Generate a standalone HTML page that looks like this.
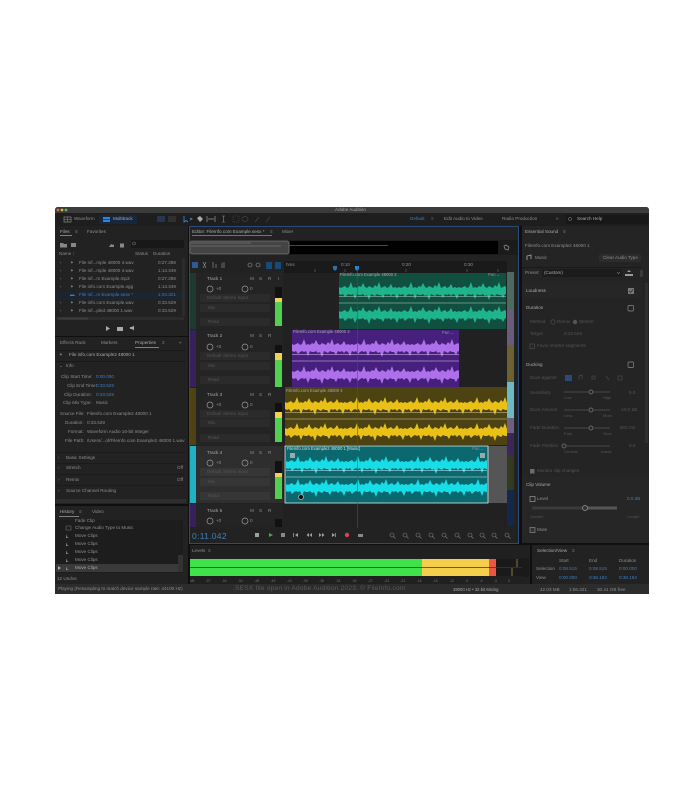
<!DOCTYPE html>
<html><head><meta charset="utf-8"><style>
html,body{margin:0;padding:0;background:#fff;width:700px;height:800px;overflow:hidden}
#r{position:absolute;left:0;top:0;width:700px;height:800px;font:4.6px/6px "Liberation Sans",sans-serif;color:#8e8e8e;filter:blur(.35px)}
#r i,#r b{position:absolute;font-style:normal;font-weight:normal;white-space:nowrap}
#r u{position:absolute;text-decoration:none;display:block}
.bl{color:#3a7fc0}.dim{color:#555}.mid{color:#707070}.br{color:#aaa}
svg{position:absolute;left:0;top:0}
</style></head><body>
<div id="r">
<!-- chrome -->
<u style="left:55px;top:207px;width:594px;height:387px;background:#0f0f0f;border-radius:3px 3px 0 0"></u>
<u style="left:55px;top:207px;width:594px;height:6px;background:#3b3b3b;border-radius:3px 3px 0 0"></u>
<u style="left:55px;top:213px;width:594px;height:13px;background:#1e1e1e"></u>
<!-- panels -->
<u style="left:55px;top:226px;width:133px;height:110px;background:#222"></u>
<u style="left:55px;top:337px;width:133px;height:167px;background:#222"></u>
<u style="left:55px;top:506px;width:133px;height:78px;background:#222"></u>
<u style="left:190px;top:227px;width:328px;height:316px;background:#222;outline:1px solid #2b4a78"></u>
<u style="left:522px;top:226px;width:127px;height:317px;background:#242424"></u>
<u style="left:522px;top:477px;width:127px;height:66px;background:#262626"></u>
<u style="left:190px;top:545px;width:340px;height:39px;background:#202020"></u>
<u style="left:532px;top:545px;width:117px;height:39px;background:#222"></u>
<u style="left:55px;top:584px;width:594px;height:10px;background:#2c2c2c"></u>

<svg width="700" height="800" viewBox="0 0 700 800">
<defs>
<path id="wv" d="M0 6L2 7L4 6L6 5L8 7L10 6L12 1L14 7L16 6L18 7L20 5L22 6L24 2L26 6L28 7L30 5L32 6L34 7L36 4L38 6L40 1L42 7L44 6L46 5L48 7L50 6L52 3L54 7L56 6L58 7L60 6L60 13L58 18L56 14L54 13L52 15L50 13L48 14L46 13L44 17L42 14L40 14L38 13L36 15L34 14L32 13L30 19L28 14L26 15L24 13L22 14L20 14L18 13L16 18L14 13L12 14L10 13L8 14L6 16L4 13L2 14L0 13Z"/>
<pattern id="pg" width="60" height="20" patternUnits="userSpaceOnUse"><use href="#wv" fill="#1eb58d"/></pattern>
<pattern id="pp" width="60" height="20" patternUnits="userSpaceOnUse"><use href="#wv" fill="#ae70ea"/></pattern>
<pattern id="py" width="60" height="20" patternUnits="userSpaceOnUse"><use href="#wv" fill="#e9c116"/></pattern>
<pattern id="pc" width="60" height="20" patternUnits="userSpaceOnUse"><use href="#wv" fill="#16dde6"/></pattern>
</defs>
<!-- window buttons -->
<circle cx="58" cy="210" r="1.400" fill="#e8604f"/><circle cx="62" cy="210" r="1.400" fill="#e3b23b"/><circle cx="66" cy="210" r="1.400" fill="#4fc04b"/>
<!-- toolbar tabs -->
<rect x="99" y="215" width="38" height="9" fill="#16263d"/>
<rect x="64" y="217" width="7" height="5" fill="none" stroke="#888" stroke-width=".7"/><path d="M64 219.500h7M67.500 217v5" stroke="#888" stroke-width=".5"/>
<rect x="103" y="217" width="7" height="5" fill="#2f86d6"/><path d="M103 219.500h7" stroke="#16263d" stroke-width=".6"/>
<rect x="157" y="216" width="8" height="6" fill="#26364e"/><rect x="168" y="216" width="8" height="6" fill="#303030"/>
<path d="M184 216v6l2-1.500 2 1.500M190 218l2 1-2 1" stroke="#3f93d8" stroke-width=".8" fill="none"/>
<path d="M197 218l3-2 3 3-3 3z" fill="#aaa"/>
<path d="M207 216v6M215 216v6M208 219h6" stroke="#999" stroke-width=".7"/>
<path d="M222 216h3M222 222h3M223.500 216v6" stroke="#888" stroke-width=".6"/>
<g stroke="#444" stroke-width=".7" fill="none"><rect x="233" y="216" width="6" height="6" stroke-dasharray="1 1"/><ellipse cx="245" cy="219" rx="3" ry="2.500"/><path d="M255 222l4-5M266 222l4-5"/></g>
<rect x="566" y="215" width="82" height="9" fill="#181818"/>
<circle cx="570" cy="219" r="1.500" fill="none" stroke="#999" stroke-width=".5"/>
<!-- left panel tabs -->
<rect x="60" y="235" width="12" height=".8" fill="#999"/>
<g fill="#888"><path d="M60 243h3l1 1h3v3.500h-7z"/><path d="M71 243h5v4h-5z"/><path d="M109 247l2-3 2 1 1-1v3z"/><rect x="120" y="243.500" width="4" height="4"/></g>
<rect x="131" y="240" width="53" height="8" fill="#181818"/>
<circle cx="134" cy="243.500" r="1.500" fill="none" stroke="#888" stroke-width=".5"/>
<!-- selected row -->
<rect x="56" y="292" width="128" height="8" fill="#1c2430"/>
<rect x="56" y="317" width="128" height="3" fill="#2c2c2c"/><rect x="58" y="317.500" width="30" height="2" fill="#3d3d3d"/>
<rect x="182" y="258" width="3" height="58" fill="#2c2c2c"/>
<g fill="#aaa"><path d="M106 326l4 2.500-4 2.500z"/><path d="M117 327h6v4h-6z"/><path d="M130 327h2l2-1.500v5l-2-1.500h-2z"/></g>
<rect x="135" y="347" width="24" height=".8" fill="#999"/>
<rect x="56" y="350" width="130" height=".6" fill="#151515"/><rect x="56" y="361" width="130" height=".6" fill="#151515"/>
<rect x="56" y="452" width="130" height=".6" fill="#171717"/><rect x="56" y="463" width="130" height=".6" fill="#171717"/><rect x="56" y="474" width="130" height=".6" fill="#171717"/><rect x="56" y="485" width="130" height=".6" fill="#171717"/>
<rect x="56" y="499" width="130" height="4" fill="#2e2e2e"/>
<rect x="59" y="516" width="20" height=".8" fill="#999"/>
<rect x="56" y="520" width="127" height="53" fill="#1d1d1d"/>
<rect x="56" y="564" width="122" height="8" fill="#3a3a3a"/><rect x="178" y="555" width="5" height="17" fill="#333"/>
<path d="M58 566l3 2-3 2z" fill="#aaa"/>
<g fill="#888"><path d="M66 534l1 3 2 1-3 0zM66 542l1 3 2 1-3 0zM66 550l1 3 2 1-3 0zM66 558l1 3 2 1-3 0zM66 566l1 3 2 1-3 0z"/><rect x="66" y="526" width="5" height="4" fill="none" stroke="#777" stroke-width=".5"/></g>

<!-- editor tabs / overview -->
<rect x="192" y="235" width="80" height=".8" fill="#888"/>
<rect x="190" y="240" width="328" height="15" fill="#1b1b1b"/>
<rect x="290" y="241" width="208" height="13" fill="#000"/>
<rect x="190" y="241" width="99" height="13" rx="2" fill="#444" stroke="#777" stroke-width=".7"/>
<path d="M191 243h60M191 246h90" stroke="#666" stroke-width="1"/>
<path d="M289 245.500h99" stroke="#6a6236" stroke-width=".7"/>
<path d="M506 245l3 2-1 3-3-1-1-3z" fill="none" stroke="#888" stroke-width=".8"/>
<!-- edit tools -->
<rect x="192" y="262" width="6" height="6" fill="#2b5a96"/>
<rect x="266" y="262" width="6" height="7" fill="#174a7c"/><rect x="275" y="262" width="6" height="7" fill="#174a7c"/>
<g fill="none" stroke="#999" stroke-width=".6"><path d="M203 262l3 6M206 262l-3 6M213 262v6M216 264v4M222 263v5M224 262v6"/><circle cx="250" cy="265" r="2"/><circle cx="258" cy="265" r="2"/></g>
<!-- ruler -->
<rect x="284" y="261" width="223" height="12" fill="#1a1a1a"/>
<g stroke="#777" stroke-width=".5"><path d="M315 269v3M345 269v3M406 269v3M467 269v3M498 269v3"/></g>
<path d="M333 266h4v3l-2 2-2-2z" fill="#2f6fb3"/><path d="M355 266h4v3l-2 2-2-2z" fill="#2f86d6"/>
<!-- timeline background -->
<rect x="284" y="273" width="223" height="254" fill="#212121"/>
<!-- Track headers -->
<rect x="190" y="273" width="93" height="56" fill="#242424"/>
<rect x="190" y="330" width="93" height="57" fill="#242424"/>
<rect x="190" y="388" width="93" height="57" fill="#242424"/>
<rect x="190" y="446" width="93" height="57" fill="#2e2e2e"/>
<rect x="190" y="504" width="93" height="23" fill="#242424"/>
<g fill="#2b2b2b"><rect x="200" y="294" width="70" height="8"/><rect x="200" y="304" width="70" height="8"/><rect x="200" y="318" width="70" height="8"/><rect x="200" y="352" width="70" height="8"/><rect x="200" y="362" width="70" height="8"/><rect x="200" y="376" width="70" height="8"/><rect x="200" y="410" width="70" height="8"/><rect x="200" y="419" width="70" height="8"/><rect x="200" y="434" width="70" height="8"/></g>
<g fill="#363636"><rect x="200" y="468" width="70" height="8"/><rect x="200" y="478" width="70" height="8"/><rect x="200" y="492" width="70" height="8"/></g>
<rect x="190" y="273" width="6" height="56" fill="#1e3a30"/>
<rect x="190" y="330" width="6" height="57" fill="#36215c"/>
<rect x="190" y="388" width="6" height="57" fill="#4e4413"/>
<rect x="190" y="446" width="6" height="57" fill="#21b1c2"/>
<rect x="190" y="504" width="6" height="23" fill="#36215c"/>
<!-- clips -->
<rect x="339" y="273" width="167" height="56" fill="#115040"/>
<g transform="translate(339 281)"><rect width="167" height="20" fill="url(#pg)"/></g>
<g transform="translate(339 305)"><rect width="167" height="20" fill="url(#pg)"/></g>
<path d="M339 296.500h167M339 303h167" stroke="#b4d4ca" stroke-width=".6"/>
<rect x="292" y="330" width="167" height="57" fill="#47207e"/>
<g transform="translate(292 338)"><rect width="167" height="20" fill="url(#pp)"/></g>
<g transform="translate(292 365)"><rect width="167" height="20" fill="url(#pp)"/></g>
<path d="M292 354.500h167M292 361h167" stroke="#dcc8f0" stroke-width=".6"/>
<rect x="285" y="387" width="222" height="58" fill="#4c4212"/>
<g transform="translate(285 396)"><rect width="222" height="20" fill="url(#py)"/></g>
<g transform="translate(285 422)"><rect width="222" height="20" fill="url(#py)"/></g>
<path d="M285 412.500h222M285 419h222" stroke="#d8d2a8" stroke-width=".6"/>
<rect x="488" y="446" width="19" height="57" fill="#555"/>
<rect x="285" y="446" width="203" height="57" fill="#0b686f" stroke="#dcecec" stroke-width=".8"/>
<g transform="translate(286 455)"><rect width="201" height="20" fill="url(#pc)"/></g>
<g transform="translate(286 478)"><rect width="201" height="20" fill="url(#pc)"/></g>
<path d="M286 470.500h201M286 477h201" stroke="#cfeff0" stroke-width=".6"/>
<rect x="290" y="453" width="5" height="5" fill="#9aa"/><rect x="480" y="453" width="5" height="5" fill="#9aa"/>
<circle cx="301" cy="497" r="2.500" fill="#111" stroke="#ccc" stroke-width=".6"/>
<!-- playhead -->
<rect x="357" y="266" width=".8" height="262" fill="#a82a3a" opacity=".7"/>
<!-- track scroll -->
<rect x="507" y="272" width="7" height="38" fill="#4c6a60"/><rect x="507" y="310" width="7" height="35" fill="#695c7b"/><rect x="507" y="345" width="7" height="37" fill="#6c6131"/><rect x="507" y="382" width="7" height="36" fill="#6cb8c5"/><rect x="507" y="418" width="7" height="15" fill="#6d6080"/><rect x="507" y="433" width="7" height="22" fill="#3a2658"/><rect x="507" y="455" width="7" height="35" fill="#343a20"/><rect x="507" y="490" width="7" height="36" fill="#14284e"/>
<!-- transport -->
<g fill="#a0a0a0"><rect x="255" y="533" width="4" height="4"/><path d="M269 533l4 2-4 2z" fill="#3fae4a"/><rect x="281" y="533" width="4" height="4" fill="#888"/><path d="M293 533v4h.8v-4zM298 533v4l-3-2zM312 533v4l-2.500-2zM309 533v4l-2.500-2zM319 533v4l2.500-2zM322 533v4l2.500-2zM336 533v4h-.8v-4zM332 533v4l3-2z"/><circle cx="347" cy="535" r="2.200" fill="#d8434c"/><path d="M358 534h5v3h-5z" fill="#888"/></g>
<g fill="none" stroke="#808080" stroke-width=".6"><circle cx="392" cy="535" r="2"/><circle cx="405" cy="535" r="2"/><circle cx="418" cy="535" r="2"/><circle cx="431" cy="535" r="2"/><circle cx="444" cy="535" r="2"/><circle cx="457" cy="535" r="2"/><circle cx="470" cy="535" r="2"/><circle cx="482" cy="535" r="2"/><circle cx="494" cy="535" r="2"/><circle cx="507" cy="535" r="2"/><path d="M393.500 536.500l2 2M406.500 536.500l2 2M419.500 536.500l2 2M432.500 536.500l2 2M445.500 536.500l2 2M458.500 536.500l2 2M471.500 536.500l2 2M483.500 536.500l2 2M495.500 536.500l2 2M508.500 536.500l2 2"/></g>
<!-- levels -->
<rect x="190" y="559" width="232" height="17" fill="#3fe24a"/>
<rect x="422" y="559" width="67" height="17" fill="#f5cf4c"/>
<rect x="489" y="559" width="7" height="17" fill="#ea5545"/>
<rect x="496" y="559" width="33" height="17" fill="#1a1a1a"/>
<path d="M190 567.500h339" stroke="#154a18" stroke-width=".8"/>
<path d="M517 559v8M512 568v8" stroke="#c9b74a" stroke-width=".6"/>
<path d="M496 567.500h33M523 559v17" stroke="#333" stroke-width=".5"/>
<!-- right panel -->
<rect x="522" y="267" width="120" height=".6" fill="#151515"/>
<rect x="522" y="283" width="120" height="15" fill="#262626"/>
<rect x="599" y="254" width="42" height="8" rx="1" fill="#2c2c2c"/>
<rect x="542" y="269" width="80" height="8" fill="#1c1c1c"/>
<path d="M617 272l1.500 2 1.500-2" stroke="#999" fill="none" stroke-width=".5"/>
<path d="M627 272l2-2 2 2zM625 274h8v2h-8z" fill="#999"/><rect x="640" y="270" width="3" height="7" fill="#3a3a3a"/>
<path d="M527 260v-4l4-1v4" fill="none" stroke="#aaa" stroke-width=".8"/>
<rect x="628" y="288" width="6" height="6" fill="#777"/><path d="M629 291l1.500 1.500 2.500-3" stroke="#222" fill="none" stroke-width=".7"/>
<rect x="628" y="305.500" width="5.500" height="5.500" rx="1" fill="none" stroke="#888" stroke-width=".7"/>
<rect x="628" y="362" width="5.500" height="5.500" rx="1" fill="none" stroke="#888" stroke-width=".7"/>
<circle cx="553" cy="322" r="2.200" fill="none" stroke="#555" stroke-width=".6"/><circle cx="575" cy="322" r="2.200" fill="#555"/>
<rect x="530" y="344" width="4.500" height="4.500" fill="none" stroke="#555" stroke-width=".6"/>
<rect x="565" y="375" width="7" height="6" fill="#2a4a78"/>
<g fill="none" stroke="#555" stroke-width=".6"><path d="M579 380v-4l3-1v4M592 376h3v3h-3zM606 376l3 4M618 376h4v4h-4z"/></g>
<g stroke="#555" stroke-width=".7"><path d="M564 392h46M564 410h46M564 428h46M564 446h46"/></g>
<g fill="#242424" stroke="#808080" stroke-width=".7"><circle cx="591" cy="392" r="2"/><circle cx="591" cy="410" r="2"/><circle cx="591" cy="428" r="2"/><circle cx="564" cy="446" r="2"/></g>
<rect x="530" y="469" width="4.500" height="4.500" fill="#6b6b6b"/>
<rect x="645" y="283" width="3" height="160" fill="#2f2f2f"/>
<rect x="530" y="496.500" width="5" height="5" fill="none" stroke="#999" stroke-width=".7"/>
<rect x="532" y="506.500" width="85" height="3" fill="#3b3b3b"/><rect x="585" y="506.500" width="32" height="3" fill="#555"/>
<circle cx="585" cy="508" r="2.500" fill="#333" stroke="#999" stroke-width=".7"/>
<rect x="530" y="527.500" width="5" height="5" fill="#333" stroke="#888" stroke-width=".7"/>
<rect x="522" y="558" width="7" height="19" fill="#1a1a1a"/>
<!-- knobs -->
<g fill="none" stroke="#9a9a9a" stroke-width=".7"><circle cx="210" cy="289" r="3"/><circle cx="245" cy="289" r="3"/><circle cx="210" cy="347" r="3"/><circle cx="245" cy="347" r="3"/><circle cx="210" cy="405" r="3"/><circle cx="245" cy="405" r="3"/><circle cx="210" cy="463" r="3"/><circle cx="245" cy="463" r="3"/><circle cx="210" cy="521" r="3"/><circle cx="245" cy="521" r="3"/></g>
</svg>

<!-- Text: top bar -->
<i style="left:335px;top:207px;color:#a4a4a4">Adobe Audition</i>
<i style="left:74px;top:216px">Waveform</i><i class="br" style="left:113px;top:216px">Multitrack</i>
<i class="bl" style="left:410px;top:216px">Default</i><i class="bl" style="left:431px;top:216px">≡</i>
<i style="left:444px;top:216px">Edit Audio to Video</i><i style="left:502px;top:216px">Radio Production</i>
<i style="left:556px;top:216px">»</i><i class="br" style="left:577px;top:216px">Search Help</i>
<!-- Files -->
<i class="br" style="left:60px;top:229px">Files</i><i style="left:75px;top:229px">≡</i><i style="left:87px;top:229px">Favorites</i>
<i style="left:59px;top:251px">Name ↑</i><i style="left:135px;top:251px">Status</i><i style="left:153px;top:251px">Duration</i>
<i style="left:70px;top:260px">✦</i><i style="left:79px;top:260px">File inf...mple 48000 4.wav</i><i style="left:158px;top:260px">0:27.288</i>
<i style="left:70px;top:268px">✦</i><i style="left:79px;top:268px">File inf...mple 48000 4.wav</i><i style="left:158px;top:268px">1:14.349</i>
<i style="left:70px;top:276px">✦</i><i style="left:79px;top:276px">File inf...m Example.mp3</i><i style="left:158px;top:276px">0:27.288</i>
<i style="left:70px;top:284px">✦</i><i style="left:79px;top:284px">File info.com Example.ogg</i><i style="left:158px;top:284px">1:14.349</i>
<i class="bl" style="left:70px;top:292px">▬</i><i class="bl" style="left:79px;top:292px">File inf...m Example.sesx *</i><i class="bl" style="left:158px;top:292px">1:04.321</i>
<i style="left:70px;top:300px">✦</i><i style="left:79px;top:300px">File info.com Example.wav</i><i style="left:158px;top:300px">0:33.529</i>
<i style="left:70px;top:308px">✦</i><i style="left:79px;top:308px">File inf...pled 48000 1.wav</i><i style="left:158px;top:308px">0:33.529</i>
<i style="left:60px;top:260px">›</i><i style="left:60px;top:268px">›</i><i style="left:60px;top:276px">›</i><i style="left:60px;top:284px">›</i><i style="left:60px;top:300px">›</i><i style="left:60px;top:308px">›</i>
<!-- Properties -->
<i style="left:60px;top:340px">Effects Rack</i><i style="left:101px;top:340px">Markers</i><i class="br" style="left:135px;top:340px">Properties</i><i style="left:162px;top:340px">≡</i><i style="left:179px;top:340px">»</i>
<i style="left:59px;top:352px">✦</i><i class="br" style="left:69px;top:352px">File info.com Example2 48000 1</i>
<i style="left:59px;top:363px">⌄</i><i style="left:66px;top:363px">Info</i>
<i style="left:61px;top:374px">Clip Start Time:</i><i class="bl" style="left:96px;top:374px">0:00.000</i>
<i style="left:67px;top:383px">Clip End Time:</i><i class="bl" style="left:96px;top:383px">0:33.529</i>
<i style="left:64px;top:392px">Clip Duration:</i><i class="bl" style="left:96px;top:392px">0:33.529</i>
<i style="left:63px;top:400px">Clip Mix Type:</i><i style="left:96px;top:400px">Music</i>
<i style="left:60px;top:411px">Source File:</i><i style="left:87px;top:411px">FileInfo.com Example2 48000 1</i>
<i style="left:65px;top:420px">Duration:</i><i style="left:87px;top:420px">0:33.529</i>
<i style="left:68px;top:429px">Format:</i><i style="left:87px;top:429px">Waveform Audio 16-bit Integer</i>
<i style="left:65px;top:438px">File Path:</i><i style="left:87px;top:438px">/Users/...of/FileInfo.com Example2 48000 1.wav</i>
<i style="left:58px;top:455px">›</i><i style="left:66px;top:455px">Basic Settings</i>
<i style="left:58px;top:465px">›</i><i style="left:66px;top:465px">Stretch</i><i style="left:177px;top:465px">Off</i>
<i style="left:58px;top:477px">›</i><i style="left:66px;top:477px">Remix</i><i style="left:177px;top:477px">Off</i>
<i style="left:58px;top:488px">›</i><i style="left:66px;top:488px">Source Channel Routing</i>
<!-- History -->
<i class="br" style="left:60px;top:509px">History</i><i style="left:79px;top:509px">≡</i><i style="left:92px;top:509px">Video</i>
<i style="left:75px;top:518px">Fade Clip</i><i style="left:75px;top:525px">Change Audio Type to Music</i>
<i style="left:75px;top:533px">Move Clips</i><i style="left:75px;top:541px">Move Clips</i><i style="left:75px;top:549px">Move Clips</i><i style="left:75px;top:557px">Move Clips</i><i class="br" style="left:75px;top:565px">Move Clips</i>
<i style="left:57px;top:576px">12 Undos</i>
<i style="left:58px;top:586px">Playing (Resampling to match device sample rate: 44100 Hz)</i>
<!-- Editor -->
<i class="br" style="left:192px;top:229px">Editor: FileInfo.com Example.sesx *</i><i style="left:270px;top:229px">≡</i><i style="left:282px;top:229px">Mixer</i>
<i style="left:286px;top:262px">hms</i><i style="left:341px;top:262px">0:10</i><i style="left:402px;top:262px">0:20</i><i style="left:464px;top:262px">0:30</i>
<!-- Track headers -->
<i class="br" style="left:207px;top:276px">Track 1</i><i style="left:250px;top:276px">M</i><i style="left:259px;top:276px">S</i><i style="left:268px;top:276px">R</i><i style="left:278px;top:276px">I</i>
<i class="dim" style="left:207px;top:295px">Default Stereo Input</i><i class="dim" style="left:208px;top:305px">Mix</i><i class="dim" style="left:208px;top:319px">Read</i>
<i class="br" style="left:207px;top:333px">Track 2</i><i style="left:250px;top:333px">M</i><i style="left:259px;top:333px">S</i><i style="left:268px;top:333px">R</i>
<i class="dim" style="left:207px;top:353px">Default Stereo Input</i><i class="dim" style="left:208px;top:363px">Mix</i><i class="dim" style="left:208px;top:377px">Read</i>
<i class="br" style="left:207px;top:392px">Track 3</i><i style="left:250px;top:392px">M</i><i style="left:259px;top:392px">S</i><i style="left:268px;top:392px">R</i>
<i class="dim" style="left:207px;top:411px">Default Stereo Input</i><i class="dim" style="left:208px;top:420px">Mix</i><i class="dim" style="left:208px;top:435px">Read</i>
<i class="br" style="left:207px;top:450px">Track 4</i><i style="left:250px;top:450px">M</i><i style="left:259px;top:450px">S</i><i style="left:268px;top:450px">R</i>
<i class="dim" style="left:207px;top:469px">Default Stereo Input</i><i class="dim" style="left:208px;top:479px">Mix</i><i class="dim" style="left:208px;top:493px">Read</i>
<i class="br" style="left:207px;top:508px">Track 5</i><i style="left:250px;top:508px">M</i><i style="left:259px;top:508px">S</i><i style="left:268px;top:508px">R</i>
<i style="left:216px;top:286px">+0</i><i style="left:250px;top:286px">0</i><i style="left:216px;top:344px">+0</i><i style="left:250px;top:344px">0</i><i style="left:216px;top:402px">+0</i><i style="left:250px;top:402px">0</i><i style="left:216px;top:460px">+0</i><i style="left:250px;top:460px">0</i><i style="left:216px;top:518px">+0</i><i style="left:250px;top:518px">0</i>
<!-- meters -->
<u style="left:275px;top:287px;width:7px;height:11px;background:#111"></u><u style="left:275px;top:298px;width:7px;height:4px;background:#f0d24e"></u><u style="left:275px;top:302px;width:7px;height:24px;background:#4fd14f"></u>
<u style="left:275px;top:345px;width:7px;height:8px;background:#111"></u><u style="left:275px;top:353px;width:7px;height:7px;background:#f0d24e"></u><u style="left:275px;top:360px;width:7px;height:27px;background:#4fd14f"></u>
<u style="left:275px;top:403px;width:7px;height:9px;background:#111"></u><u style="left:275px;top:412px;width:7px;height:6px;background:#f0d24e"></u><u style="left:275px;top:418px;width:7px;height:24px;background:#4fd14f"></u>
<u style="left:275px;top:461px;width:7px;height:12px;background:#111"></u><u style="left:275px;top:473px;width:7px;height:4px;background:#f0d24e"></u><u style="left:275px;top:477px;width:7px;height:22px;background:#4fd14f"></u>
<u style="left:275px;top:519px;width:7px;height:8px;background:#111"></u>
<!-- clip labels -->
<i class="br" style="left:340px;top:272px;font-size:4.200px">FileInfo.com Example 48000 2</i><i style="left:488px;top:272px;font-size:4.200px">Pan ⌄</i>
<i class="br" style="left:293px;top:329px;font-size:4.200px">FileInfo.com Example 48000 3</i><i style="left:442px;top:330px;font-size:4.200px">Pan ⌄</i>
<i class="br" style="left:286px;top:388px;font-size:4.200px">FileInfo.com Example 48000 4</i>
<i style="left:287px;top:446px;font-size:4.200px;color:#ddd">FileInfo.com Example2 48000 1 [Music]</i><i style="left:472px;top:446px;font-size:4.200px">Pan ⌄</i>
<!-- time -->
<i style="left:192px;top:532px;font-size:8.500px;line-height:8px;letter-spacing:.3px;color:#3f7fbc">0:11.042</i>
<!-- Levels -->
<i style="left:192px;top:548px">Levels</i><i style="left:208px;top:548px">≡</i>
<i class="mid" style="left:190px;top:578px;font-size:3.500px;word-spacing:10.200px">dB -57 -54 -51 -48 -45 -42 -39 -36 -33 -30 -27 -24 -21 -18 -15 -12 -9 -6 -3 0</i>
<!-- Essential Sound -->
<i class="br" style="left:525px;top:229px">Essential Sound</i><i style="left:563px;top:229px">≡</i>
<i style="left:525px;top:243px">FileInfo.com Example2 48000 1</i>
<i style="left:535px;top:255px">Music</i><i style="left:603px;top:255px">Clear Audio Type</i>
<i style="left:525px;top:270px">Preset:</i><i class="br" style="left:544px;top:270px">(Custom)</i>
<i class="br" style="left:526px;top:288px">Loudness</i><i class="br" style="left:526px;top:305px">Duration</i>
<i class="dim" style="left:530px;top:319px">Method</i><i class="dim" style="left:557px;top:319px">Remix</i><i class="dim" style="left:579px;top:319px">Stretch</i>
<i class="dim" style="left:530px;top:331px">Target</i><i class="dim" style="left:564px;top:331px">0:33.529</i>
<i class="dim" style="left:537px;top:343px">Favor shorter segments</i>
<i class="br" style="left:526px;top:362px">Ducking</i><i class="dim" style="left:530px;top:375px">Duck against</i>
<i class="dim" style="left:530px;top:390px">Sensitivity</i><i class="dim" style="left:564px;top:395px;font-size:4px">Low</i><i class="dim" style="left:603px;top:395px;font-size:4px">High</i><i class="dim" style="left:629px;top:390px">5.0</i>
<i class="dim" style="left:530px;top:407px">Duck Amount</i><i class="dim" style="left:564px;top:413px;font-size:4px">Less</i><i class="dim" style="left:603px;top:413px;font-size:4px">More</i><i class="dim" style="left:620px;top:407px">-18.0 dB</i>
<i class="dim" style="left:530px;top:425px">Fade Duration</i><i class="dim" style="left:564px;top:431px;font-size:4px">Fast</i><i class="dim" style="left:603px;top:431px;font-size:4px">Slow</i><i class="dim" style="left:620px;top:425px">800 ms</i>
<i class="dim" style="left:530px;top:443px">Fade Position</i><i class="dim" style="left:564px;top:449px;font-size:4px">Outside</i><i class="dim" style="left:601px;top:449px;font-size:4px">Inside</i><i class="dim" style="left:629px;top:443px">0.0</i>
<i class="dim" style="left:537px;top:468px">Monitor clip changes</i>
<i class="br" style="left:526px;top:482px">Clip Volume</i>
<i style="left:537px;top:496px">Level</i><i class="bl" style="left:627px;top:496px">0.0 dB</i>
<i class="dim" style="left:530px;top:514px;font-size:4px">Quieter</i><i class="dim" style="left:627px;top:514px;font-size:4px">Louder</i>
<i style="left:537px;top:527px">Mute</i>
<!-- Selection/View -->
<i class="br" style="left:537px;top:548px">Selection/View</i><i style="left:572px;top:548px">≡</i>
<i style="left:559px;top:558px">Start</i><i style="left:589px;top:558px">End</i><i style="left:619px;top:558px">Duration</i>
<i style="left:536px;top:566px">Selection</i><i class="bl" style="left:559px;top:566px">0:08.515</i><i class="bl" style="left:589px;top:566px">0:08.515</i><i class="bl" style="left:619px;top:566px">0:00.000</i>
<i style="left:536px;top:575px">View</i><i class="bl" style="left:559px;top:575px">0:00.000</i><i class="bl" style="left:589px;top:575px">0:36.184</i><i class="bl" style="left:619px;top:575px">0:36.184</i>
<!-- status -->
<i style="left:233px;top:586px;font-size:6.600px;color:#5a5a5a;letter-spacing:.2px">.SESX file open in Adobe Audition 2023. © FileInfo.com</i>
<i style="left:453px;top:587px;font-size:4.200px;color:#aaa">48000 Hz • 32-bit Mixing</i>
<i style="left:540px;top:587px">42.03 MB</i><i style="left:569px;top:587px">1:56.321</i><i style="left:597px;top:587px">30.41 GB free</i>
</div>
</body></html>
